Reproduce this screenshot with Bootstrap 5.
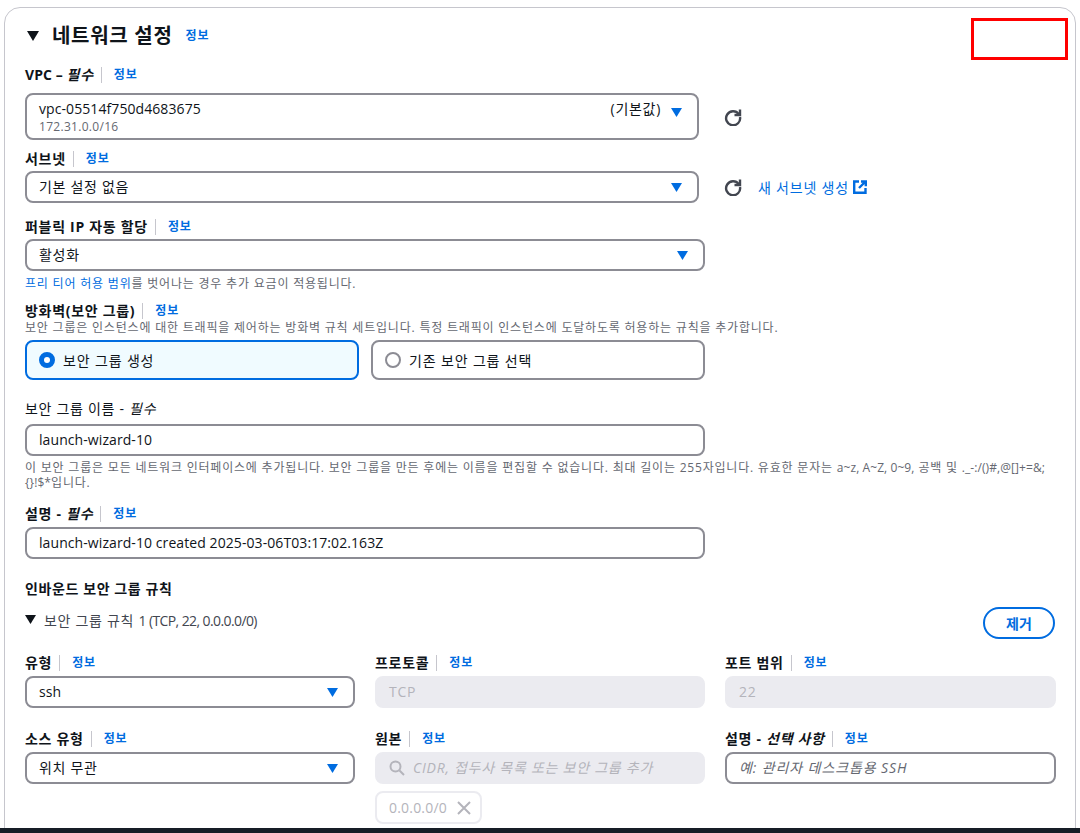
<!DOCTYPE html>
<html lang="ko">
<head>
  <meta charset="UTF-8" />
  <title>네트워크 설정</title>
  <link href="https://cdn.jsdelivr.net/npm/bootstrap@5.3.3/dist/css/bootstrap.min.css" rel="stylesheet" />
  <style>
    html, body { height: 100%; }
    body {
      font-family: "Open Sans", "Noto Sans CJK KR", sans-serif;
      font-size: 14px;
      color: #0f141a;
      background: #fff;
      overflow: hidden;
    }
    .page-area { padding: 7px 4px 0; min-height: 0; }
    .net-panel {
      border: 1px solid #c6c6cd;
      border-radius: 16px;
      padding: 14px 19px 40px 20px;
      height: 900px;
    }
    .foot-bar { height: 5px; background: #161d26; flex-shrink: 0; }
    .red-mark { top: 10px; left: 966px; width: 97px; height: 42px; border: 3px solid #f00; }
    .panel-title { font-size: 20px; font-weight: 700; line-height: 28px; letter-spacing: .7px; margin: 0; }
    .info-link { color: #006ce0; font-size: 12px; font-weight: 700; text-decoration: none; letter-spacing: .9px; line-height: 16px; }
    .field-label { font-weight: 700; line-height: 16px; letter-spacing: .7px; height: 16px; }
    .label-sep { width: 1px; height: 16px; background: #c6c6cd; margin: 0 12px 0 7px; }
    .box-field {
      border: 2px solid #8c8c94;
      border-radius: 8px;
      padding: 0 15px 0 12px;
      height: 32px;
      line-height: 28px;
      letter-spacing: .7px;
      background: #fff;
    }
    .box-field.vpc-box { height: 47px; padding-top: 4px; padding-bottom: 4px; line-height: 20px; flex: none; }
    .box-off { background: #ebebf0; border-color: #ebebf0; color: #b4b4bb; }
    .lat { letter-spacing: .08px; }
    .sub-line { color: #656871; font-size: 12px; line-height: 16px; letter-spacing: .3px; }
    .hint-line { color: #656871; font-size: 12px; line-height: 15px; letter-spacing: .8px; }
    .hint-line a { color: #006ce0; text-decoration: none; }
    .w-form { width: 680px; }
    .w-short { width: 674px; flex: none; }
    .radio-tile {
      width: 334px;
      height: 40px;
      border: 2px solid #8c8c94;
      border-radius: 8px;
      padding: 0 12px;
      letter-spacing: .85px;
    }
    .radio-tile.picked { border-color: #006ce0; background: #f0fbff; }
    .radio-tile .form-check-input { width: 16px; height: 16px; margin: 0 8px 0 0; border: 2px solid #8c8c94; }
    .radio-tile .form-check-input:checked { background-color: #006ce0; border-color: #006ce0; }
    .rule-grid { display: grid; grid-template-columns: 330px 330px 331px; column-gap: 20px; }
    .sec-head { font-weight: 700; line-height: 18px; letter-spacing: .6px; }
    .rule-line { color: #424650; letter-spacing: .7px; line-height: 20px; padding-bottom: 4px; }
    .rule-line .rule-sum { letter-spacing: -.6px; }
    .rule-tri { margin: 0 8px 4px 0; }
    .remove-btn {
      border: 2px solid #006ce0;
      color: #006ce0;
      background: #fff;
      border-radius: 20px;
      font-weight: 700;
      width: 72px;
      height: 32px;
      font-size: 14px;
      padding: 0;
      margin-right: 1px;
    }
    .token-box {
      width: 107px; height: 33px;
      border: 2px solid #ebebf0; border-radius: 8px;
      color: #b4b4bb; padding: 0 9px 0 12px;
      letter-spacing: .2px;
    }
    .ph-text { font-style: italic; color: #b4b4bb; letter-spacing: .75px; }
    .ph-dark { font-style: italic; color: #656871; letter-spacing: .9px; }
    .link-blue { color: #006ce0; text-decoration: none; letter-spacing: .8px; }
    .head-tri { margin: 0 13px 0 2px; }
    .head-info { margin-left: 13px; }
    .refresh-ico { margin-left: 25px; flex: none; }
    .default-tag { margin-right: 10px; }
  </style>
</head>
<body class="d-flex flex-column">
  <div class="page-area flex-grow-1 overflow-hidden">
    <div class="net-panel position-relative">
      <div class="red-mark position-absolute"></div>

      <div class="d-flex align-items-center">
        <svg width="12" height="10" viewBox="0 0 12 10" class="head-tri"><path d="M0 0h12L6 10z" fill="#0f141a"/></svg>
        <h2 class="panel-title">네트워크 설정</h2>
        <a href="#" class="info-link head-info">정보</a>
      </div>

      <div class="d-flex align-items-center field-label" style="margin-top:17px">
        <span><span class="lat">VPC – </span><i>필수</i></span><span class="label-sep"></span><a href="#" class="info-link">정보</a>
      </div>
      <div class="d-flex align-items-center" style="margin-top:10px">
        <div class="box-field vpc-box w-short d-flex justify-content-between">
          <div>
            <div class="lat">vpc-05514f750d4683675</div>
            <div class="sub-line">172.31.0.0/16</div>
          </div>
          <div class="d-flex align-items-start">
            <span class="default-tag">(기본값)</span>
            <svg width="11" height="9" viewBox="0 0 11 9" style="margin-top:9px"><path d="M0 0h11L5.500 9z" fill="#006ce0"/></svg>
          </div>
        </div>
        <svg width="18" height="18" viewBox="0 0 18 18" fill="none" stroke="#424650" stroke-width="2.400" class="refresh-ico"><path d="M14.800 6.200A7 7 0 1 0 16 9"/><path d="M16 1.500v5.500h-5.500"/></svg>
      </div>

      <div class="d-flex align-items-center field-label" style="margin-top:11px">
        <span>서브넷</span><span class="label-sep"></span><a href="#" class="info-link">정보</a>
      </div>
      <div class="d-flex align-items-center" style="margin-top:4px">
        <div class="box-field w-short d-flex justify-content-between align-items-center">
          <span>기본 설정 없음</span>
          <svg width="11" height="9" viewBox="0 0 11 9"><path d="M0 0h11L5.500 9z" fill="#006ce0"/></svg>
        </div>
        <svg width="18" height="18" viewBox="0 0 18 18" fill="none" stroke="#424650" stroke-width="2.400" class="refresh-ico"><path d="M14.800 6.200A7 7 0 1 0 16 9"/><path d="M16 1.500v5.500h-5.500"/></svg>
        <a href="#" class="link-blue ms-3 d-flex align-items-center">새 서브넷 생성
          <svg width="14" height="14" viewBox="0 0 14 14" fill="none" stroke="#006ce0" stroke-width="2.400" class="ms-1"><path d="M6 1.500H1.200v11.300h11.300V8"/><path d="M6 8l6-6M8 1.500h4.800v4.800"/></svg>
        </a>
      </div>

      <div class="d-flex align-items-center field-label" style="margin-top:16px">
        <span>퍼블릭 IP 자동 할당</span><span class="label-sep"></span><a href="#" class="info-link">정보</a>
      </div>
      <div class="box-field w-form d-flex justify-content-between align-items-center" style="margin-top:4px">
        <span>활성화</span>
        <svg width="11" height="9" viewBox="0 0 11 9"><path d="M0 0h11L5.500 9z" fill="#006ce0"/></svg>
      </div>
      <div class="hint-line" style="margin-top:5px"><a href="#">프리 티어 허용 범위</a>를 벗어나는 경우 추가 요금이 적용됩니다.</div>

      <div class="d-flex align-items-center field-label" style="margin-top:12px">
        <span>방화벽(보안 그룹)</span><span class="label-sep"></span><a href="#" class="info-link">정보</a>
      </div>
      <div class="hint-line" style="margin-top:1px">보안 그룹은 인스턴스에 대한 트래픽을 제어하는 방화벽 규칙 세트입니다. 특정 트래픽이 인스턴스에 도달하도록 허용하는 규칙을 추가합니다.</div>
      <div class="d-flex w-form justify-content-between" style="margin-top:5px">
        <label class="radio-tile picked d-flex align-items-center">
          <input class="form-check-input" type="radio" name="sg" checked /><span>보안 그룹 생성</span>
        </label>
        <label class="radio-tile d-flex align-items-center">
          <input class="form-check-input" type="radio" name="sg" /><span>기존 보안 그룹 선택</span>
        </label>
      </div>

      <div class="field-label fw-normal" style="margin-top:21px">보안 그룹 이름 - <i>필수</i></div>
      <div class="box-field w-form lat" style="margin-top:7px">launch-wizard-10</div>
      <div class="hint-line" style="margin-top:4px">이 보안 그룹은 모든 네트워크 인터페이스에 추가됩니다. 보안 그룹을 만든 후에는 이름을 편집할 수 없습니다. 최대 길이는 255자입니다. 유효한 문자는 <span class="lat">a~z, A~Z, 0~9,</span> 공백 및 <span class="lat">._-:/()#,@[]+=&amp;;</span><br /><span class="lat">{}!$*</span>입니다.</div>

      <div class="d-flex align-items-center field-label" style="margin-top:16px">
        <span>설명 - <i>필수</i></span><span class="label-sep"></span><a href="#" class="info-link">정보</a>
      </div>
      <div class="box-field w-form lat" style="margin-top:5px">launch-wizard-10 created 2025-03-06T03:17:02.163Z</div>

      <div class="sec-head" style="margin-top:21px">인바운드 보안 그룹 규칙</div>
      <div class="d-flex justify-content-between align-items-center" style="margin-top:9px">
        <div class="rule-line d-flex align-items-center">
          <svg width="11" height="9" viewBox="0 0 11 9" class="rule-tri"><path d="M0 0h11L5.500 9z" fill="#0f141a"/></svg>
          <span>보안 그룹 규칙 <span class="rule-sum">1 (TCP, 22, 0.0.0.0/0)</span></span>
        </div>
        <button type="button" class="remove-btn btn">제거</button>
      </div>

      <div class="rule-grid" style="margin-top:16px">
        <div>
          <div class="d-flex align-items-center field-label"><span>유형</span><span class="label-sep"></span><a href="#" class="info-link">정보</a></div>
          <div class="box-field d-flex justify-content-between align-items-center lat" style="margin-top:5px"><span>ssh</span><svg width="11" height="9" viewBox="0 0 11 9"><path d="M0 0h11L5.500 9z" fill="#006ce0"/></svg></div>
        </div>
        <div>
          <div class="d-flex align-items-center field-label"><span>프로토콜</span><span class="label-sep"></span><a href="#" class="info-link">정보</a></div>
          <div class="box-field box-off" style="margin-top:5px">TCP</div>
        </div>
        <div>
          <div class="d-flex align-items-center field-label"><span>포트 범위</span><span class="label-sep"></span><a href="#" class="info-link">정보</a></div>
          <div class="box-field box-off" style="margin-top:5px">22</div>
        </div>
      </div>

      <div class="rule-grid" style="margin-top:23px">
        <div>
          <div class="d-flex align-items-center field-label"><span>소스 유형</span><span class="label-sep"></span><a href="#" class="info-link">정보</a></div>
          <div class="box-field d-flex justify-content-between align-items-center" style="margin-top:5px"><span>위치 무관</span><svg width="11" height="9" viewBox="0 0 11 9"><path d="M0 0h11L5.500 9z" fill="#006ce0"/></svg></div>
        </div>
        <div>
          <div class="d-flex align-items-center field-label"><span>원본</span><span class="label-sep"></span><a href="#" class="info-link">정보</a></div>
          <div class="box-field box-off d-flex align-items-center" style="margin-top:5px">
            <svg width="16" height="16" viewBox="0 0 16 16" fill="none" stroke="#b4b4bb" stroke-width="2" class="me-2 flex-shrink-0"><circle cx="6.500" cy="6.500" r="5"/><path d="M10.500 10.500l4.500 4.500"/></svg>
            <span class="ph-text text-nowrap">CIDR, 접두사 목록 또는 보안 그룹 추가</span>
          </div>
          <div class="token-box d-flex align-items-center justify-content-between" style="margin-top:7px">
            <span>0.0.0.0/0</span>
            <svg width="14" height="14" viewBox="0 0 14 14" stroke="#b4b4bb" stroke-width="2"><path d="M1 1l12 12M13 1L1 13"/></svg>
          </div>
        </div>
        <div>
          <div class="d-flex align-items-center field-label"><span>설명 - <i>선택 사항</i></span><span class="label-sep"></span><a href="#" class="info-link">정보</a></div>
          <div class="box-field" style="margin-top:5px"><span class="ph-dark">예: 관리자 데스크톱용 SSH</span></div>
        </div>
      </div>
    </div>
  </div>
  <div class="foot-bar"></div>
  <script src="https://cdn.jsdelivr.net/npm/bootstrap@5.3.3/dist/js/bootstrap.bundle.min.js"></script>
</body>
</html>
